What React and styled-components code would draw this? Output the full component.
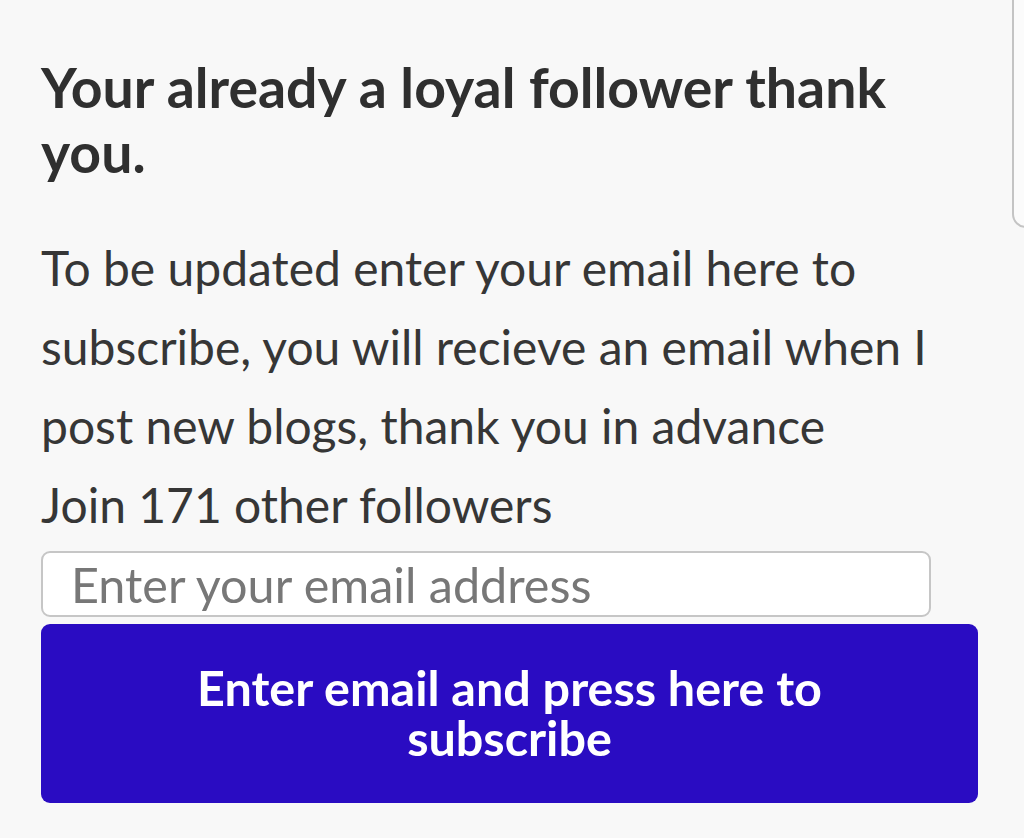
import React from "react";
import styled, { createGlobalStyle } from "styled-components";

const Global = createGlobalStyle`
  html, body { margin: 0; padding: 0; background: #f8f8f8; }
  body { font-family: Lato, "Noto Sans", sans-serif; color: #333333; overflow: hidden; }
  * { box-sizing: border-box; }
`;

const Page = styled.div`
  position: relative;
  width: 1024px;
  height: 838px;
  overflow: hidden;
  background: #f8f8f8;
`;

const EdgePanel = styled.div`
  position: absolute;
  left: 1012px;
  top: -20px;
  width: 40px;
  height: 248px;
  border: 2px solid #c4c4c4;
  border-radius: 14px;
  background: #fbfbfb;
`;

const Widget = styled.section`
  width: 980px;
  padding: 54px 0 0 41px;
  display: flex;
  flex-direction: column;
`;

const Title = styled.h2`
  margin: 0;
  font-size: 55.4px;
  line-height: 65px;
  font-weight: 700;
  color: #2f2f2f;
  width: 900px;
`;

const Text = styled.p`
  margin: ${(p) => p.$mt || 0}px 0 0;
  font-size: 48px;
  line-height: 79px;
  font-weight: 400;
  color: #363636;
  width: 936px;
`;

const EmailInput = styled.input`
  margin-top: 7px;
  width: 890px;
  height: 66px;
  border: 2px solid #c6c6c6;
  border-radius: 9px;
  background: #ffffff;
  padding: 0 0 0 28px;
  font-family: Lato, "Noto Sans", sans-serif;
  font-size: 48.5px;
  color: #333;
  outline: none;
  &::placeholder { color: #777777; }
`;

const SubmitButton = styled.button`
  margin-top: 7px;
  width: 937px;
  height: 179px;
  border: none;
  border-radius: 9px;
  background: #2a0cc2;
  color: #ffffff;
  font-family: Lato, "Noto Sans", sans-serif;
  font-size: 48.5px;
  font-weight: 700;
  line-height: 50px;
  padding: 0 150px 4px;
  text-align: center;
  cursor: pointer;
`;

export default function App() {
  return (
    <Page>
      <Global />
      <Widget>
        <Title>Your already a loyal follower thank you.</Title>
        <Text $mt={44}>
          To be updated enter your email here to subscribe, you will recieve an
          email when I post new blogs, thank you in advance
        </Text>
        <Text>Join 171 other followers</Text>
        <EmailInput type="email" placeholder="Enter your email address" />
        <SubmitButton type="button">
          Enter email and press here to subscribe
        </SubmitButton>
      </Widget>
      <EdgePanel />
    </Page>
  );
}
